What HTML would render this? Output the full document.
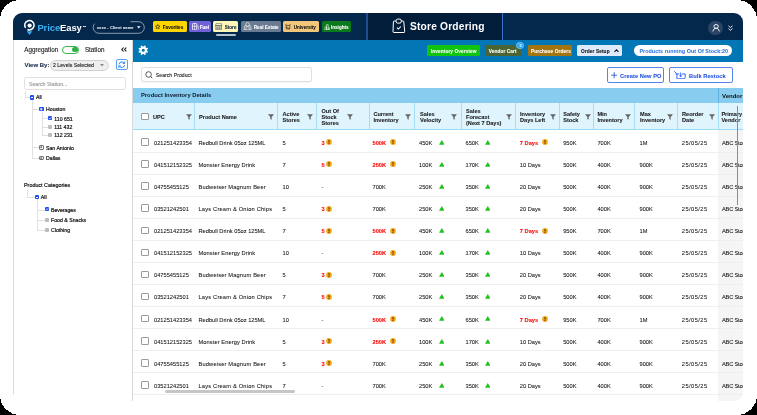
<!DOCTYPE html>
<html><head><meta charset="utf-8"><style>
*{margin:0;padding:0;box-sizing:border-box}
html,body{width:757px;height:415px;overflow:hidden;background:#000;font-family:"Liberation Sans",sans-serif}
.frame{position:absolute;left:0;top:0;width:757px;height:415px}
.app{position:absolute;left:0;top:0;width:757px;height:415px;clip-path:inset(13px 14px 14px 13px round 9px);background:#fff}
.app *{position:absolute}
.hdr{left:13px;top:13px;width:730px;height:27px;background:#03284b}
.so{left:366px;top:13px;width:137px;height:27px;background:#021d3a;border-left:2px solid #1d4f8f;border-right:1px solid #3a6fd0}
.sot{left:410px;top:20.5px;font-size:10.2px;font-weight:bold;color:#fff;white-space:nowrap;letter-spacing:0.2px}
.logo-t{left:37.4px;top:22.4px;font-size:9.4px;font-weight:bold;white-space:nowrap;color:#fff;letter-spacing:-0.05px}
.logo-t b{position:static;color:#3ab2fb}
.tm{left:83px;top:25.8px;width:2.6px;height:0.8px;background:#cfd8e2}
.pill{display:none}
.pillt{left:96.8px;top:24.8px;font-size:4.1px;font-weight:bold;color:#fff;white-space:nowrap;letter-spacing:0.05px}
.nb{top:21.2px;height:10.5px;border-radius:1.5px;font-size:4.6px;font-weight:bold;white-space:nowrap;line-height:13.6px;-webkit-text-stroke:0.08px currentColor}
.nb span{position:static}
.av{left:708px;top:20.6px;width:14.6px;height:14.6px;border-radius:50%;background:#2a4463}
.tb{left:133px;top:40px;width:610px;height:21.5px;background:#0377b5}
.btn{top:45px;height:10.8px;border-radius:1.5px;font-size:4.75px;font-weight:bold;color:#fff;white-space:nowrap;line-height:13.9px;letter-spacing:0.1px;-webkit-text-stroke:0.08px currentColor}
.oos{left:633.6px;top:44.9px;width:98.6px;height:10.9px;border-radius:6px;background:#fff;color:#1f6fe0;font-size:5.4px;font-weight:bold;white-space:nowrap;line-height:12.6px;padding-left:5.8px;letter-spacing:0.05px}
.srch{left:140.6px;top:67.2px;width:171px;height:15.2px;border:1px solid #dedede;border-radius:2.5px;background:#fff;box-shadow:0 0.5px 0.5px rgba(0,0,0,0.06)}
.srcht{left:155.8px;top:72.1px;font-size:5.1px;color:#222;-webkit-text-stroke:0.1px #222;white-space:nowrap;letter-spacing:0.05px}
.ob{top:67.2px;height:15.8px;border:1px solid #5584ee;border-radius:2px;background:#fff}
.obt{top:72.5px;font-size:5.7px;font-weight:bold;color:#1f50e0;-webkit-text-stroke:0.06px currentColor;white-space:nowrap;letter-spacing:0.05px}
.side{left:13px;top:40px;width:120px;height:361px;background:#fff;border-left:1px solid #d9d9d9;border-right:1px solid #d9d9d9}
.st{font-size:6px;color:#222;white-space:nowrap;-webkit-text-stroke:0.12px currentColor}
.wrap{left:0;top:0;width:757px;height:415px;will-change:transform}
.tbl{left:0;top:0;width:757px;height:415px;will-change:transform}
.pid{left:133px;top:88px;width:610px;height:14.8px;background:#88cdef;font-size:5.8px;font-weight:bold;color:#0d1a2b;padding-left:8px;line-height:14.5px;white-space:nowrap}
.vgrp{left:718px;top:88px;width:1px;height:14.8px;background:#5fb4de}
.vtxt{left:722px;top:92.8px;font-size:6px;font-weight:bold;color:#111}
.hrow{left:133px;top:103px;width:610px;height:27px;background:#dff4fd;border-bottom:1px solid #9cdbf7}
.hl{font-size:5.6px;line-height:6.1px;color:#1a1a1a;font-weight:bold;-webkit-text-stroke:0.08px currentColor;white-space:nowrap;transform:translateY(-50%);top:117px}
.flt{top:114px}
.vd{top:103px;width:1px;height:26px;background:#a6dcf6}
.cb{width:7.5px;height:7.5px;border:0.8px solid #9a9a9a;border-radius:1px;background:#fff}
.t{font-size:5.7px;color:#111;-webkit-text-stroke:0.06px currentColor;white-space:nowrap;transform:translateY(-50%);margin-top:1.3px}
.red{color:#f00;font-weight:bold}
.wn{width:6px;height:6px}
.tri{width:5.6px;height:4.8px}
.rline{left:133px;width:610px;height:1px;background:#efefef}
.vcol{left:718px;top:130px;width:25px;height:271px;background:#f5f5f5}
.hscroll{left:165px;top:389.8px;width:130px;height:3px;border-radius:2px;background:#c6c6c6}
.vscroll{left:737px;top:105.5px;width:1.3px;height:99px;background:#8c8c8c}

</style></head><body>
<svg class="frame" width="757" height="415" viewBox="0 0 757 415" shape-rendering="crispEdges"><rect x="0" y="0" width="757" height="415" rx="20" ry="20" fill="#fff"/></svg>
<div class="app">
<div class="wrap">
<div class="hdr"></div>
<div class="so"></div>
<svg style="left:391px;top:17px" width="16" height="18" viewBox="0 0 16 18"><path d="M5.2 4H3.2Q2.4 4 2.4 4.8L2 14.7Q2 15.5 2.8 15.5H13Q13.8 15.5 13.7 14.7L12.8 4.8Q12.7 4 12 4H10.2" fill="none" stroke="#fff" stroke-width="1"/><rect x="5.2" y="2.1" width="5" height="4" rx="1.3" fill="none" stroke="#fff" stroke-width="1"/><path d="M6 10.6L7.4 12L9.9 9.5" fill="none" stroke="#fff" stroke-width="1.05"/></svg>
<div class="sot">Store Ordering</div>
<svg style="left:22.2px;top:17.7px" width="14" height="18" viewBox="0 0 14 18"><path d="M3.55 9.9A4.7 4.7 0 1 1 5.41 11.46" fill="none" stroke="#fff" stroke-width="1.5"/><circle cx="7.6" cy="7.6" r="2.15" fill="#fff"/><path d="M4.7 13.2H10.3L7.5 17.1Z" fill="#35aaf2"/></svg>
<div class="logo-t"><b>Price</b>Easy</div>
<div class="tm"></div>
<svg style="left:92px;top:20.5px" width="53" height="13" viewBox="0 0 53 13"><path d="M38.5 0.7H46.5A5.8 5.8 0 0 1 46.5 12.3H7A5.8 5.8 0 0 1 1.2 6.5" fill="none" stroke="#aeb8c6" stroke-width="0.8"/><path d="M1.2 6.5A5.8 5.8 0 0 1 2.6 2.7" fill="none" stroke="#aeb8c6" stroke-width="0.8"/></svg>
<div class="pillt">xxxx - Client name</div>
<svg style="left:137.3px;top:26px" width="3.5" height="3" viewBox="0 0 3.5 3"><path d="M0 0.2H3.5L1.75 2.6Z" fill="#fff"/></svg>
<div class="nb" style="left:152.5px;width:34.5px;background:#ffd500;color:#111;padding-left:10.3px">Favorites</div>
<svg style="left:155.4px;top:24.1px" width="5.5" height="5.2" viewBox="0 0 10 9.5"><path d="M5 0.8L6.2 3.6L9.2 3.8L6.9 5.8L7.6 8.8L5 7.2L2.4 8.8L3.1 5.8L0.8 3.8L3.8 3.6Z" fill="none" stroke="#111" stroke-width="1.1" stroke-linejoin="round"/></svg>
<div class="nb" style="left:189.4px;width:21.5px;background:#7161d8;color:#fff;padding-left:10.3px">Fuel</div>
<svg style="left:191.6px;top:23px" width="7" height="7.4" viewBox="0 0 7 7.4"><rect x="0.5" y="0.5" width="4.2" height="6.4" rx="0.6" fill="none" stroke="#fff" stroke-width="0.75"/><path d="M0.5 3.3H4.7M2.6 0.5V6.9" stroke="#fff" stroke-width="0.6"/><path d="M4.7 2.3L6.3 3.2V6.6" fill="none" stroke="#fff" stroke-width="0.6"/></svg>
<div class="nb" style="left:213.4px;width:24.6px;background:#fff6b8;color:#0d2340;padding-left:11.3px">Store</div>
<svg style="left:215.3px;top:23px" width="7.4" height="7.4" viewBox="0 0 7.4 7.4"><path d="M1 0.6H6.4L7 2.6H0.4Z" fill="none" stroke="#5c6b7c" stroke-width="0.6"/><rect x="0.9" y="2.6" width="5.6" height="4.3" fill="none" stroke="#5c6b7c" stroke-width="0.7"/><path d="M0.9 4.2H6.5M0.9 5.6H6.5M2.8 2.6V6.9M4.6 2.6V6.9" stroke="#5c6b7c" stroke-width="0.5"/></svg>
<div style="left:215.8px;top:34px;width:20.6px;height:1.8px;background:#b5c1cd;border-radius:1px"></div>
<div class="nb" style="left:241px;width:39.8px;background:#6a7a90;color:#fff;padding-left:12.8px">Real Estate</div>
<svg style="left:242.8px;top:22px" width="9.2" height="8.4" viewBox="0 0 9.2 8.4"><circle cx="4.6" cy="2.4" r="1.8" fill="none" stroke="#fff" stroke-width="0.6"/><path d="M1.3 7.8V4.6A1.7 1.7 0 0 1 3 3.3M7.9 7.8V4.6A1.7 1.7 0 0 0 6.2 3.3M3 7.8V4.6H6.2V7.8M0.6 7.8H8.6" fill="none" stroke="#fff" stroke-width="0.6"/></svg>
<div class="nb" style="left:283.2px;width:36px;background:#f2c77a;color:#111;padding-left:10.5px">University</div>
<svg style="left:284.8px;top:24.2px" width="6" height="5.5" viewBox="0 0 6 5.5"><path d="M0.4 0.6L3 1.7L5.6 0.6M1.2 1.2V4.9H4.8V1.2M1.2 3L4.8 4.9" fill="none" stroke="#222" stroke-width="0.65"/></svg>
<div class="nb" style="left:321.8px;width:29.4px;background:#0b7a1b;color:#fff;padding-left:9.2px">Insights</div>
<svg style="left:323.6px;top:23.6px" width="6.6" height="6.2" viewBox="0 0 6.6 6.2"><path d="M0.4 5.8H6.2M1 5.8V2.8H2.6V5.8M2.6 5.8V0.6H4.2V5.8M4.2 5.8V3.8H5.8V5.8" fill="none" stroke="#fff" stroke-width="0.55"/></svg>
<div class="av"></div>
<svg style="left:711px;top:23.6px" width="10" height="10" viewBox="0 0 10 10"><ellipse cx="5.1" cy="2.4" rx="2.2" ry="1.9" fill="none" stroke="#fff" stroke-width="0.95"/><path d="M1.9 7.4C2.3 5.4 3.3 4.3 5.1 4.3C6.9 4.3 7.9 5.4 8.3 7.4" fill="none" stroke="#fff" stroke-width="0.95"/></svg>
<svg style="left:728.2px;top:24.7px" width="5" height="6.4" viewBox="0 0 5 6.4"><path d="M0.5 0.6L2.5 2.7L4.5 0.6M0.5 3.4L2.5 5.5L4.5 3.4" fill="none" stroke="#fff" stroke-width="0.9"/></svg>
<div class="tb"></div>
<svg style="left:137.25px;top:43.65px" width="12.5" height="12.5" viewBox="0 0 12.5 12.5"><path fill="#fff" fill-rule="evenodd" d="M9.95 6.84 L11.06 7.41 L10.47 8.84 L9.28 8.45 L8.45 9.28 L8.84 10.47 L7.41 11.06 L6.84 9.95 L5.66 9.95 L5.09 11.06 L3.66 10.47 L4.05 9.28 L3.22 8.45 L2.03 8.84 L1.44 7.41 L2.55 6.84 L2.55 5.66 L1.44 5.09 L2.03 3.66 L3.22 4.05 L4.05 3.22 L3.66 2.03 L5.09 1.44 L5.66 2.55 L6.84 2.55 L7.41 1.44 L8.84 2.03 L8.45 3.22 L9.28 4.05 L10.47 3.66 L11.06 5.09 L9.95 5.66Z M7.80 6.25 A1.55 1.55 0 1 0 4.70 6.25 A1.55 1.55 0 1 0 7.80 6.25Z"/></svg>
<div class="btn" style="left:427px;width:53px;background:#10c40f;padding-left:3.8px">Inventory Overview</div>
<div class="btn" style="left:484.8px;width:36.1px;background:#4b6434;padding-left:3.9px">Vendor Cart</div>
<div style="left:516.4px;top:41.7px;width:7.4px;height:7.4px;border-radius:50%;background:#22a5fb;border:0.6px solid #6cc4ff"></div>
<div style="left:519.4px;top:43px;font-size:4px;color:#fff;font-weight:bold;line-height:5px">5</div>
<div class="btn" style="left:528.3px;width:43.6px;background:#a27510;padding-left:2.8px">Purchase Orders</div>
<div class="btn" style="left:576.9px;width:44.9px;background:#dfeafb;color:#111;padding-left:4.2px">Order Setup</div>
<svg style="left:613.8px;top:49.2px" width="5" height="3.4" viewBox="0 0 5 3.4"><path d="M0.5 2.9L2.5 0.8L4.5 2.9" fill="none" stroke="#111" stroke-width="1.1"/></svg>
<div class="oos">Products running Out Of Stock:20</div>
<div class="srch"></div>
<svg style="left:144.6px;top:70.6px" width="8" height="8" viewBox="0 0 8 8"><circle cx="3.6" cy="3.5" r="2.8" fill="none" stroke="#333" stroke-width="0.8"/><path d="M5.6 5.5L7.2 7.2" stroke="#333" stroke-width="0.9"/></svg>
<div class="srcht">Search Product</div>
<div class="ob" style="left:607.2px;width:56.7px"></div>
<svg style="left:610.6px;top:72.2px" width="6.4" height="6.4" viewBox="0 0 6.4 6.4"><path d="M3.2 0.2V6.2M0.2 3.2H6.2" stroke="#2a5bd7" stroke-width="0.9"/></svg>
<div class="obt" style="left:620.1px">Create New PO</div>
<div class="ob" style="left:668.7px;width:63.9px"></div>
<svg style="left:673.6px;top:70.5px" width="12" height="8.6" viewBox="0 0 12 8.6"><path d="M0.5 0.6L2.2 2.1M2 3H4.9M8.4 3H11.2V6.6Q11.2 7.8 10 7.8H2.9V3" fill="none" stroke="#2356f0" stroke-width="0.9" stroke-linecap="round"/><path d="M6.7 1.5V5" stroke="#2356f0" stroke-width="0.9"/><path d="M4.9 4.5H8.5L6.7 6.1Z" fill="#2356f0"/></svg>
<div class="obt" style="left:689.1px">Bulk Restock</div>

<div class="side"></div>
<div class="st" style="left:24.3px;top:46.2px;font-size:6.3px;color:#222">Aggregation</div>
<div style="left:61.5px;top:45.5px;width:17.5px;height:8px;border-radius:4px;border:0.9px solid #33b54a;background:#fff"></div>
<div style="left:72px;top:46.8px;width:5.5px;height:5.5px;border-radius:50%;background:#2fb043"></div>
<div class="st" style="left:84.9px;top:46.2px;font-size:6.3px;color:#222">Station</div>
<svg style="left:120.5px;top:46.6px" width="6" height="5" viewBox="0 0 6 5"><path d="M2.6 0.5L0.8 2.5L2.6 4.5M5.4 0.5L3.6 2.5L5.4 4.5" fill="none" stroke="#111" stroke-width="1.1"/></svg>
<div class="st" style="left:24.5px;top:62px;font-size:6px;font-weight:bold;color:#1b2f52">View By:</div>
<div style="left:49.5px;top:59.5px;width:59.5px;height:11px;border-radius:6px;border:0.8px solid #d0d0d0;background:#efefef"></div>
<div class="st" style="left:53px;top:62.3px;font-size:5.2px;color:#222">2 Levels Selected</div>
<svg style="left:100px;top:64px" width="4" height="3" viewBox="0 0 4 3"><path d="M0 0H4L2 2.5Z" fill="#888"/></svg>
<div style="left:116px;top:59.2px;width:12px;height:11.2px;border-radius:2px;border:1px solid #5aa0f5;background:#fff"></div>
<svg style="left:118.4px;top:61.2px" width="7.6" height="7.4" viewBox="0 0 7.6 7.4"><path d="M0.9 3.4A2.9 2.9 0 0 1 6.1 2.1M6.7 4A2.9 2.9 0 0 1 1.5 5.3" fill="none" stroke="#2a82f0" stroke-width="1"/><path d="M6.8 0.5V2.5H4.8M0.8 6.9V4.9H2.8" fill="none" stroke="#2a82f0" stroke-width="0.9"/></svg>
<div style="left:24px;top:77.2px;width:101.8px;height:13.2px;border-radius:2.5px;border:0.8px solid #e0e0e0;background:#fff"></div>
<div class="st" style="left:29px;top:81.3px;font-size:5.2px;color:#999">Search Station...</div>
<div style="left:24.5px;top:91px;width:0;height:6.5px;border-left:0.8px solid #e0e0e0"></div>
<div style="left:24.5px;top:97px;width:5px;height:0;border-top:0.8px solid #e0e0e0"></div>
<div style="left:29.8px;top:95px;width:4.3px;height:4.5px;border-radius:1px;background:#1d4ff5"></div>
<div style="left:30.8px;top:97px;width:2.3px;height:0.7px;background:#fff"></div>
<div class="st" style="left:36px;top:94.3px;font-size:5.2px;color:#111;-webkit-text-stroke:0.2px #111">All</div>
<div style="left:31.5px;top:99.5px;width:0;height:58.5px;border-left:0.8px solid #e0e0e0"></div>
<div style="left:31.5px;top:109.2px;width:7.5px;height:0;border-top:0.8px solid #e0e0e0"></div>
<div style="left:31.5px;top:147.4px;width:7.5px;height:0;border-top:0.8px solid #e0e0e0"></div>
<div style="left:31.5px;top:157.8px;width:7.5px;height:0;border-top:0.8px solid #e0e0e0"></div>
<div style="left:39.3px;top:107px;width:4.4px;height:4.4px;border-radius:1px;background:#1d4ff5"></div>
<svg style="left:39.3px;top:107px" width="4.4" height="4.4" viewBox="0 0 4.4 4.4"><path d="M2.2 0.9V3.5M0.9 2.2H3.5" stroke="#fff" stroke-width="0.85"/></svg>
<div class="st" style="left:46px;top:106.4px;font-size:5.2px;color:#111;-webkit-text-stroke:0.2px #111">Houston</div>
<div style="left:41.5px;top:111.5px;width:0;height:24px;border-left:0.8px solid #e0e0e0"></div>
<div style="left:41.5px;top:118.3px;width:6.5px;height:0;border-top:0.8px solid #e0e0e0"></div>
<div style="left:41.5px;top:126.7px;width:6.5px;height:0;border-top:0.8px solid #e0e0e0"></div>
<div style="left:41.5px;top:135.3px;width:6.5px;height:0;border-top:0.8px solid #e0e0e0"></div>
<div style="left:48px;top:116.2px;width:4.4px;height:4.2px;border-radius:1px;background:#1d4ff5"></div>
<svg style="left:48px;top:116.2px" width="4.4" height="4.2" viewBox="0 0 4.4 4.2"><path d="M1 2.1L1.9 3L3.4 1.3" fill="none" stroke="#fff" stroke-width="0.7"/></svg>
<div class="st" style="left:54.3px;top:115.5px;font-size:5.2px;color:#111;-webkit-text-stroke:0.2px #111">110 651</div>
<div style="left:48px;top:124.6px;width:4.4px;height:4.3px;border-radius:1px;background:#bdbdbd"></div>
<div class="st" style="left:54.3px;top:123.9px;font-size:5.2px;color:#111;-webkit-text-stroke:0.2px #111">111 432</div>
<div style="left:48px;top:133px;width:4.4px;height:4.3px;border-radius:1px;background:#bdbdbd"></div>
<div class="st" style="left:54.3px;top:132.3px;font-size:5.2px;color:#111;-webkit-text-stroke:0.2px #111">112 231</div>
<div style="left:39.3px;top:145.2px;width:4.4px;height:4.4px;border-radius:1px;border:0.6px solid #777;background:#fff"></div>
<svg style="left:39.3px;top:145.2px" width="4.4" height="4.4" viewBox="0 0 4.4 4.4"><path d="M2.2 1V3.4M1 2.2H3.4" stroke="#444" stroke-width="0.6"/></svg>
<div class="st" style="left:46px;top:144.6px;font-size:5.2px;color:#111;-webkit-text-stroke:0.2px #111">San Antonio</div>
<div style="left:39.3px;top:155.6px;width:4.4px;height:4.4px;border-radius:1px;border:0.6px solid #777;background:#fff"></div>
<svg style="left:39.3px;top:155.6px" width="4.4" height="4.4" viewBox="0 0 4.4 4.4"><path d="M2.2 1V3.4M1 2.2H3.4" stroke="#444" stroke-width="0.6"/></svg>
<div class="st" style="left:46px;top:155px;font-size:5.2px;color:#111;-webkit-text-stroke:0.2px #111">Dallas</div>
<div class="st" style="left:24px;top:182.3px;font-size:5.4px;color:#111;-webkit-text-stroke:0.2px #111">Product Categories</div>
<div style="left:26.5px;top:189.5px;width:0;height:7.5px;border-left:0.8px solid #e0e0e0"></div>
<div style="left:26.5px;top:197px;width:8px;height:0;border-top:0.8px solid #e0e0e0"></div>
<div style="left:34.6px;top:195.2px;width:4.3px;height:3.6px;border-radius:1px;background:#1d4ff5"></div>
<div style="left:35.5px;top:196.7px;width:2.5px;height:0.6px;background:#fff"></div>
<div class="st" style="left:40.8px;top:194.3px;font-size:5.2px;color:#111;-webkit-text-stroke:0.2px #111">All</div>
<div style="left:36.6px;top:199px;width:0;height:31px;border-left:0.8px solid #e0e0e0"></div>
<div style="left:36.6px;top:209.5px;width:8px;height:0;border-top:0.8px solid #e0e0e0"></div>
<div style="left:36.6px;top:220px;width:8px;height:0;border-top:0.8px solid #e0e0e0"></div>
<div style="left:36.6px;top:229.9px;width:8px;height:0;border-top:0.8px solid #e0e0e0"></div>
<div style="left:44.7px;top:207.3px;width:4.2px;height:4px;border-radius:1px;background:#1d4ff5"></div>
<svg style="left:44.7px;top:207.3px" width="4.2" height="4" viewBox="0 0 4.2 4"><path d="M1 2L1.8 2.8L3.2 1.2" fill="none" stroke="#fff" stroke-width="0.7"/></svg>
<div class="st" style="left:51px;top:206.6px;font-size:5.2px;color:#111;-webkit-text-stroke:0.2px #111">Beverages</div>
<div style="left:44.7px;top:217.8px;width:4.2px;height:4.2px;border-radius:1px;background:#bdbdbd"></div>
<div class="st" style="left:51px;top:217.1px;font-size:5.2px;color:#111;-webkit-text-stroke:0.2px #111">Food &amp; Snacks</div>
<div style="left:44.7px;top:227.8px;width:4.2px;height:4.2px;border-radius:1px;background:#bdbdbd"></div>
<div class="st" style="left:51px;top:227.1px;font-size:5.2px;color:#111;-webkit-text-stroke:0.2px #111">Clothing</div>

</div>
<div class="tbl">
<div class="pid">Product Inventory Details</div>
<div class="vgrp"></div>
<div class="vtxt">Vendor</div>
<div class="hrow"></div>
<div class="hl" style="left:153px">UPC</div><div class="hl" style="left:199px">Product Name</div><div class="hl" style="left:282.5px">Active<br>Stores</div><div class="hl" style="left:321.5px">Out Of<br>Stock<br>Stores</div><div class="hl" style="left:373.4px">Current<br>Inventory</div><div class="hl" style="left:420px">Sales<br>Velocity</div><div class="hl" style="left:466px">Sales<br>Forecast<br>(Next 7 Days)</div><div class="hl" style="left:520px">Inventory<br>Days Left</div><div class="hl" style="left:563.2px">Safety<br>Stock</div><div class="hl" style="left:597.4px">Min<br>Inventory</div><div class="hl" style="left:640px">Max<br>Inventory</div><div class="hl" style="left:682px">Reorder<br>Date</div><div class="hl" style="left:721.4px">Primary<br>Vendor</div><svg class="flt" style="left:185.6px" width="6" height="6" viewBox="0 0 6 6"><path d="M0 0.3H6L3.7 3V5.7L2.3 5V3Z" fill="#666"/></svg><svg class="flt" style="left:267.6px" width="6" height="6" viewBox="0 0 6 6"><path d="M0 0.3H6L3.7 3V5.7L2.3 5V3Z" fill="#666"/></svg><svg class="flt" style="left:307.4px" width="6" height="6" viewBox="0 0 6 6"><path d="M0 0.3H6L3.7 3V5.7L2.3 5V3Z" fill="#666"/></svg><svg class="flt" style="left:346.8px" width="6" height="6" viewBox="0 0 6 6"><path d="M0 0.3H6L3.7 3V5.7L2.3 5V3Z" fill="#666"/></svg><svg class="flt" style="left:405.2px" width="6" height="6" viewBox="0 0 6 6"><path d="M0 0.3H6L3.7 3V5.7L2.3 5V3Z" fill="#666"/></svg><svg class="flt" style="left:451.4px" width="6" height="6" viewBox="0 0 6 6"><path d="M0 0.3H6L3.7 3V5.7L2.3 5V3Z" fill="#666"/></svg><svg class="flt" style="left:505.8px" width="6" height="6" viewBox="0 0 6 6"><path d="M0 0.3H6L3.7 3V5.7L2.3 5V3Z" fill="#666"/></svg><svg class="flt" style="left:550.4px" width="6" height="6" viewBox="0 0 6 6"><path d="M0 0.3H6L3.7 3V5.7L2.3 5V3Z" fill="#666"/></svg><svg class="flt" style="left:585.3px" width="6" height="6" viewBox="0 0 6 6"><path d="M0 0.3H6L3.7 3V5.7L2.3 5V3Z" fill="#666"/></svg><svg class="flt" style="left:625.1px" width="6" height="6" viewBox="0 0 6 6"><path d="M0 0.3H6L3.7 3V5.7L2.3 5V3Z" fill="#666"/></svg><svg class="flt" style="left:666.9px" width="6" height="6" viewBox="0 0 6 6"><path d="M0 0.3H6L3.7 3V5.7L2.3 5V3Z" fill="#666"/></svg><svg class="flt" style="left:708.6px" width="6" height="6" viewBox="0 0 6 6"><path d="M0 0.3H6L3.7 3V5.7L2.3 5V3Z" fill="#666"/></svg><div class="vd" style="left:194px"></div><div class="vd" style="left:277px"></div><div class="vd" style="left:316px"></div><div class="vd" style="left:369px"></div><div class="vd" style="left:414px"></div><div class="vd" style="left:461px"></div><div class="vd" style="left:515px"></div><div class="vd" style="left:559px"></div><div class="vd" style="left:593px"></div><div class="vd" style="left:634px"></div><div class="vd" style="left:677px"></div><div class="vd" style="left:718px"></div><span class="cb" style="left:141px;top:112.5px"></span>
<div class="vcol"></div>
<span class="cb" style="left:141px;top:138.1px"></span><span class="t" style="left:154px;top:141.3px">021251423354</span><span class="t" style="left:198.5px;top:141.3px;letter-spacing:0px">Redbull Drink 05oz 125ML</span><span class="t" style="left:282.5px;top:141.3px">5</span><span class="t red" style="left:321.5px;top:141.3px">3</span><svg class="wn" style="left:326.4px;top:139.0px" width="6" height="6" viewBox="0 0 6 6"><circle cx="3" cy="3" r="2.9" fill="#f5a81c"/><rect x="2.5" y="1.2" width="1" height="2.3" fill="#4a2800"/><rect x="2.5" y="4" width="1" height="0.9" fill="#4a2800"/></svg><span class="t red" style="left:372.5px;top:141.3px">500K</span><svg class="wn" style="left:389.9px;top:139.0px" width="6" height="6" viewBox="0 0 6 6"><circle cx="3" cy="3" r="2.9" fill="#f5a81c"/><rect x="2.5" y="1.2" width="1" height="2.3" fill="#4a2800"/><rect x="2.5" y="4" width="1" height="0.9" fill="#4a2800"/></svg><span class="t" style="left:419px;top:141.3px">450K</span><svg class="tri" style="left:438.6px;top:140px" width="5.6" height="4.8" viewBox="0 0 5.6 4.8"><path d="M2.8 0L5.6 4.8H0Z" fill="#1ec31e"/></svg><span class="t" style="left:465.5px;top:141.3px">650K</span><svg class="tri" style="left:484.9px;top:140px" width="5.6" height="4.8" viewBox="0 0 5.6 4.8"><path d="M2.8 0L5.6 4.8H0Z" fill="#1ec31e"/></svg><span class="t red" style="left:519.8px;top:141.3px">7 Days</span><svg class="wn" style="left:541.5px;top:139.0px" width="6" height="6" viewBox="0 0 6 6"><circle cx="3" cy="3" r="2.9" fill="#f5a81c"/><rect x="2.5" y="1.2" width="1" height="2.3" fill="#4a2800"/><rect x="2.5" y="4" width="1" height="0.9" fill="#4a2800"/></svg><span class="t" style="left:563.2px;top:141.3px">950K</span><span class="t" style="left:597.4px;top:141.3px">700K</span><span class="t" style="left:639.5px;top:141.3px">1M</span><span class="t" style="left:681.8px;top:141.3px;letter-spacing:0.45px">25/05/25</span><span class="t" style="left:722px;top:141.3px;letter-spacing:-0.2px">ABC Store</span><div class="rline" style="top:152px"></div><span class="cb" style="left:141px;top:160.2px"></span><span class="t" style="left:154px;top:163.42px">041512152325</span><span class="t" style="left:198.5px;top:163.42px;letter-spacing:0.09px">Monster Energy Drink</span><span class="t" style="left:282.5px;top:163.42px">7</span><span class="t red" style="left:321.5px;top:163.42px">5</span><svg class="wn" style="left:326.4px;top:161.0px" width="6" height="6" viewBox="0 0 6 6"><circle cx="3" cy="3" r="2.9" fill="#f5a81c"/><rect x="2.5" y="1.2" width="1" height="2.3" fill="#4a2800"/><rect x="2.5" y="4" width="1" height="0.9" fill="#4a2800"/></svg><span class="t red" style="left:372.5px;top:163.42px">250K</span><svg class="wn" style="left:389.9px;top:161.0px" width="6" height="6" viewBox="0 0 6 6"><circle cx="3" cy="3" r="2.9" fill="#f5a81c"/><rect x="2.5" y="1.2" width="1" height="2.3" fill="#4a2800"/><rect x="2.5" y="4" width="1" height="0.9" fill="#4a2800"/></svg><span class="t" style="left:419px;top:163.42px">100K</span><svg class="tri" style="left:438.6px;top:162px" width="5.6" height="4.8" viewBox="0 0 5.6 4.8"><path d="M2.8 0L5.6 4.8H0Z" fill="#1ec31e"/></svg><span class="t" style="left:465.5px;top:163.42px">170K</span><svg class="tri" style="left:484.9px;top:162px" width="5.6" height="4.8" viewBox="0 0 5.6 4.8"><path d="M2.8 0L5.6 4.8H0Z" fill="#1ec31e"/></svg><span class="t" style="left:519.8px;top:163.42px">10 Days</span><span class="t" style="left:563.2px;top:163.42px">500K</span><span class="t" style="left:597.4px;top:163.42px">400K</span><span class="t" style="left:639.5px;top:163.42px">900K</span><span class="t" style="left:681.8px;top:163.42px;letter-spacing:0.45px">25/05/25</span><span class="t" style="left:722px;top:163.42px;letter-spacing:-0.2px">ABC Store</span><div class="rline" style="top:174px"></div><span class="cb" style="left:141px;top:182.3px"></span><span class="t" style="left:154px;top:185.54px">04755455125</span><span class="t" style="left:198.5px;top:185.54px;letter-spacing:0.165px">Budweiser Magnum Beer</span><span class="t" style="left:282.5px;top:185.54px">10</span><span class="t" style="left:321.5px;top:185.54px">-</span><span class="t" style="left:372.5px;top:185.54px">700K</span><span class="t" style="left:419px;top:185.54px">250K</span><svg class="tri" style="left:438.6px;top:184px" width="5.6" height="4.8" viewBox="0 0 5.6 4.8"><path d="M2.8 0L5.6 4.8H0Z" fill="#1ec31e"/></svg><span class="t" style="left:465.5px;top:185.54px">350K</span><svg class="tri" style="left:484.9px;top:184px" width="5.6" height="4.8" viewBox="0 0 5.6 4.8"><path d="M2.8 0L5.6 4.8H0Z" fill="#1ec31e"/></svg><span class="t" style="left:519.8px;top:185.54px">20 Days</span><span class="t" style="left:563.2px;top:185.54px">500K</span><span class="t" style="left:597.4px;top:185.54px">400K</span><span class="t" style="left:639.5px;top:185.54px">900K</span><span class="t" style="left:681.8px;top:185.54px;letter-spacing:0.45px">25/05/25</span><span class="t" style="left:722px;top:185.54px;letter-spacing:-0.2px">ABC Store</span><div class="rline" style="top:196px"></div><span class="cb" style="left:141px;top:204.4px"></span><span class="t" style="left:154px;top:207.66px">03521242501</span><span class="t" style="left:198.5px;top:207.66px;letter-spacing:0.2px">Lays Cream &amp; Onion Chips</span><span class="t" style="left:282.5px;top:207.66px">5</span><span class="t red" style="left:321.5px;top:207.66px">3</span><svg class="wn" style="left:326.4px;top:206.0px" width="6" height="6" viewBox="0 0 6 6"><circle cx="3" cy="3" r="2.9" fill="#f5a81c"/><rect x="2.5" y="1.2" width="1" height="2.3" fill="#4a2800"/><rect x="2.5" y="4" width="1" height="0.9" fill="#4a2800"/></svg><span class="t" style="left:372.5px;top:207.66px">700K</span><span class="t" style="left:419px;top:207.66px">250K</span><svg class="tri" style="left:438.6px;top:206px" width="5.6" height="4.8" viewBox="0 0 5.6 4.8"><path d="M2.8 0L5.6 4.8H0Z" fill="#1ec31e"/></svg><span class="t" style="left:465.5px;top:207.66px">350K</span><svg class="tri" style="left:484.9px;top:206px" width="5.6" height="4.8" viewBox="0 0 5.6 4.8"><path d="M2.8 0L5.6 4.8H0Z" fill="#1ec31e"/></svg><span class="t" style="left:519.8px;top:207.66px">20 Days</span><span class="t" style="left:563.2px;top:207.66px">500K</span><span class="t" style="left:597.4px;top:207.66px">400K</span><span class="t" style="left:639.5px;top:207.66px">900K</span><span class="t" style="left:681.8px;top:207.66px;letter-spacing:0.45px">25/05/25</span><span class="t" style="left:722px;top:207.66px;letter-spacing:-0.2px">ABC Store</span><div class="rline" style="top:218px"></div><span class="cb" style="left:141px;top:226.5px"></span><span class="t" style="left:154px;top:229.78px">021251423354</span><span class="t" style="left:198.5px;top:229.78px;letter-spacing:0px">Redbull Drink 05oz 125ML</span><span class="t" style="left:282.5px;top:229.78px">7</span><span class="t red" style="left:321.5px;top:229.78px">5</span><svg class="wn" style="left:326.4px;top:228.0px" width="6" height="6" viewBox="0 0 6 6"><circle cx="3" cy="3" r="2.9" fill="#f5a81c"/><rect x="2.5" y="1.2" width="1" height="2.3" fill="#4a2800"/><rect x="2.5" y="4" width="1" height="0.9" fill="#4a2800"/></svg><span class="t red" style="left:372.5px;top:229.78px">500K</span><svg class="wn" style="left:389.9px;top:228.0px" width="6" height="6" viewBox="0 0 6 6"><circle cx="3" cy="3" r="2.9" fill="#f5a81c"/><rect x="2.5" y="1.2" width="1" height="2.3" fill="#4a2800"/><rect x="2.5" y="4" width="1" height="0.9" fill="#4a2800"/></svg><span class="t" style="left:419px;top:229.78px">450K</span><svg class="tri" style="left:438.6px;top:228px" width="5.6" height="4.8" viewBox="0 0 5.6 4.8"><path d="M2.8 0L5.6 4.8H0Z" fill="#1ec31e"/></svg><span class="t" style="left:465.5px;top:229.78px">650K</span><svg class="tri" style="left:484.9px;top:228px" width="5.6" height="4.8" viewBox="0 0 5.6 4.8"><path d="M2.8 0L5.6 4.8H0Z" fill="#1ec31e"/></svg><span class="t red" style="left:519.8px;top:229.78px">7 Days</span><svg class="wn" style="left:541.5px;top:228.0px" width="6" height="6" viewBox="0 0 6 6"><circle cx="3" cy="3" r="2.9" fill="#f5a81c"/><rect x="2.5" y="1.2" width="1" height="2.3" fill="#4a2800"/><rect x="2.5" y="4" width="1" height="0.9" fill="#4a2800"/></svg><span class="t" style="left:563.2px;top:229.78px">950K</span><span class="t" style="left:597.4px;top:229.78px">700K</span><span class="t" style="left:639.5px;top:229.78px">1M</span><span class="t" style="left:681.8px;top:229.78px;letter-spacing:0.45px">25/05/25</span><span class="t" style="left:722px;top:229.78px;letter-spacing:-0.2px">ABC Store</span><div class="rline" style="top:240px"></div><span class="cb" style="left:141px;top:248.6px"></span><span class="t" style="left:154px;top:251.9px">041512152325</span><span class="t" style="left:198.5px;top:251.9px;letter-spacing:0.09px">Monster Energy Drink</span><span class="t" style="left:282.5px;top:251.9px">10</span><span class="t" style="left:321.5px;top:251.9px">-</span><span class="t red" style="left:372.5px;top:251.9px">250K</span><svg class="wn" style="left:389.9px;top:250.0px" width="6" height="6" viewBox="0 0 6 6"><circle cx="3" cy="3" r="2.9" fill="#f5a81c"/><rect x="2.5" y="1.2" width="1" height="2.3" fill="#4a2800"/><rect x="2.5" y="4" width="1" height="0.9" fill="#4a2800"/></svg><span class="t" style="left:419px;top:251.9px">100K</span><svg class="tri" style="left:438.6px;top:250px" width="5.6" height="4.8" viewBox="0 0 5.6 4.8"><path d="M2.8 0L5.6 4.8H0Z" fill="#1ec31e"/></svg><span class="t" style="left:465.5px;top:251.9px">170K</span><svg class="tri" style="left:484.9px;top:250px" width="5.6" height="4.8" viewBox="0 0 5.6 4.8"><path d="M2.8 0L5.6 4.8H0Z" fill="#1ec31e"/></svg><span class="t" style="left:519.8px;top:251.9px">10 Days</span><span class="t" style="left:563.2px;top:251.9px">500K</span><span class="t" style="left:597.4px;top:251.9px">400K</span><span class="t" style="left:639.5px;top:251.9px">900K</span><span class="t" style="left:681.8px;top:251.9px;letter-spacing:0.45px">25/05/25</span><span class="t" style="left:722px;top:251.9px;letter-spacing:-0.2px">ABC Store</span><div class="rline" style="top:262px"></div><span class="cb" style="left:141px;top:270.7px"></span><span class="t" style="left:154px;top:274.02px">04755455125</span><span class="t" style="left:198.5px;top:274.02px;letter-spacing:0.165px">Budweiser Magnum Beer</span><span class="t" style="left:282.5px;top:274.02px">5</span><span class="t red" style="left:321.5px;top:274.02px">3</span><svg class="wn" style="left:326.4px;top:272.0px" width="6" height="6" viewBox="0 0 6 6"><circle cx="3" cy="3" r="2.9" fill="#f5a81c"/><rect x="2.5" y="1.2" width="1" height="2.3" fill="#4a2800"/><rect x="2.5" y="4" width="1" height="0.9" fill="#4a2800"/></svg><span class="t" style="left:372.5px;top:274.02px">700K</span><span class="t" style="left:419px;top:274.02px">250K</span><svg class="tri" style="left:438.6px;top:272px" width="5.6" height="4.8" viewBox="0 0 5.6 4.8"><path d="M2.8 0L5.6 4.8H0Z" fill="#1ec31e"/></svg><span class="t" style="left:465.5px;top:274.02px">350K</span><svg class="tri" style="left:484.9px;top:272px" width="5.6" height="4.8" viewBox="0 0 5.6 4.8"><path d="M2.8 0L5.6 4.8H0Z" fill="#1ec31e"/></svg><span class="t" style="left:519.8px;top:274.02px">20 Days</span><span class="t" style="left:563.2px;top:274.02px">500K</span><span class="t" style="left:597.4px;top:274.02px">400K</span><span class="t" style="left:639.5px;top:274.02px">900K</span><span class="t" style="left:681.8px;top:274.02px;letter-spacing:0.45px">25/05/25</span><span class="t" style="left:722px;top:274.02px;letter-spacing:-0.2px">ABC Store</span><div class="rline" style="top:284px"></div><span class="cb" style="left:141px;top:292.8px"></span><span class="t" style="left:154px;top:296.14px">03521242501</span><span class="t" style="left:198.5px;top:296.14px;letter-spacing:0.2px">Lays Cream &amp; Onion Chips</span><span class="t" style="left:282.5px;top:296.14px">7</span><span class="t red" style="left:321.5px;top:296.14px">5</span><svg class="wn" style="left:326.4px;top:294.0px" width="6" height="6" viewBox="0 0 6 6"><circle cx="3" cy="3" r="2.9" fill="#f5a81c"/><rect x="2.5" y="1.2" width="1" height="2.3" fill="#4a2800"/><rect x="2.5" y="4" width="1" height="0.9" fill="#4a2800"/></svg><span class="t" style="left:372.5px;top:296.14px">700K</span><span class="t" style="left:419px;top:296.14px">250K</span><svg class="tri" style="left:438.6px;top:294px" width="5.6" height="4.8" viewBox="0 0 5.6 4.8"><path d="M2.8 0L5.6 4.8H0Z" fill="#1ec31e"/></svg><span class="t" style="left:465.5px;top:296.14px">350K</span><svg class="tri" style="left:484.9px;top:294px" width="5.6" height="4.8" viewBox="0 0 5.6 4.8"><path d="M2.8 0L5.6 4.8H0Z" fill="#1ec31e"/></svg><span class="t" style="left:519.8px;top:296.14px">20 Days</span><span class="t" style="left:563.2px;top:296.14px">500K</span><span class="t" style="left:597.4px;top:296.14px">400K</span><span class="t" style="left:639.5px;top:296.14px">900K</span><span class="t" style="left:681.8px;top:296.14px;letter-spacing:0.45px">25/05/25</span><span class="t" style="left:722px;top:296.14px;letter-spacing:-0.2px">ABC Store</span><div class="rline" style="top:306px"></div><span class="cb" style="left:141px;top:314.9px"></span><span class="t" style="left:154px;top:318.26px">021251423354</span><span class="t" style="left:198.5px;top:318.26px;letter-spacing:0px">Redbull Drink 05oz 125ML</span><span class="t" style="left:282.5px;top:318.26px">10</span><span class="t" style="left:321.5px;top:318.26px">-</span><span class="t red" style="left:372.5px;top:318.26px">500K</span><svg class="wn" style="left:389.9px;top:316.0px" width="6" height="6" viewBox="0 0 6 6"><circle cx="3" cy="3" r="2.9" fill="#f5a81c"/><rect x="2.5" y="1.2" width="1" height="2.3" fill="#4a2800"/><rect x="2.5" y="4" width="1" height="0.9" fill="#4a2800"/></svg><span class="t" style="left:419px;top:318.26px">450K</span><svg class="tri" style="left:438.6px;top:316px" width="5.6" height="4.8" viewBox="0 0 5.6 4.8"><path d="M2.8 0L5.6 4.8H0Z" fill="#1ec31e"/></svg><span class="t" style="left:465.5px;top:318.26px">650K</span><svg class="tri" style="left:484.9px;top:316px" width="5.6" height="4.8" viewBox="0 0 5.6 4.8"><path d="M2.8 0L5.6 4.8H0Z" fill="#1ec31e"/></svg><span class="t red" style="left:519.8px;top:318.26px">7 Days</span><svg class="wn" style="left:541.5px;top:316.0px" width="6" height="6" viewBox="0 0 6 6"><circle cx="3" cy="3" r="2.9" fill="#f5a81c"/><rect x="2.5" y="1.2" width="1" height="2.3" fill="#4a2800"/><rect x="2.5" y="4" width="1" height="0.9" fill="#4a2800"/></svg><span class="t" style="left:563.2px;top:318.26px">950K</span><span class="t" style="left:597.4px;top:318.26px">700K</span><span class="t" style="left:639.5px;top:318.26px">1M</span><span class="t" style="left:681.8px;top:318.26px;letter-spacing:0.45px">25/05/25</span><span class="t" style="left:722px;top:318.26px;letter-spacing:-0.2px">ABC Store</span><div class="rline" style="top:328px"></div><span class="cb" style="left:141px;top:337.0px"></span><span class="t" style="left:154px;top:340.38px">041512152325</span><span class="t" style="left:198.5px;top:340.38px;letter-spacing:0.09px">Monster Energy Drink</span><span class="t" style="left:282.5px;top:340.38px">5</span><span class="t red" style="left:321.5px;top:340.38px">3</span><svg class="wn" style="left:326.4px;top:338.0px" width="6" height="6" viewBox="0 0 6 6"><circle cx="3" cy="3" r="2.9" fill="#f5a81c"/><rect x="2.5" y="1.2" width="1" height="2.3" fill="#4a2800"/><rect x="2.5" y="4" width="1" height="0.9" fill="#4a2800"/></svg><span class="t red" style="left:372.5px;top:340.38px">250K</span><svg class="wn" style="left:389.9px;top:338.0px" width="6" height="6" viewBox="0 0 6 6"><circle cx="3" cy="3" r="2.9" fill="#f5a81c"/><rect x="2.5" y="1.2" width="1" height="2.3" fill="#4a2800"/><rect x="2.5" y="4" width="1" height="0.9" fill="#4a2800"/></svg><span class="t" style="left:419px;top:340.38px">100K</span><svg class="tri" style="left:438.6px;top:339px" width="5.6" height="4.8" viewBox="0 0 5.6 4.8"><path d="M2.8 0L5.6 4.8H0Z" fill="#1ec31e"/></svg><span class="t" style="left:465.5px;top:340.38px">170K</span><svg class="tri" style="left:484.9px;top:339px" width="5.6" height="4.8" viewBox="0 0 5.6 4.8"><path d="M2.8 0L5.6 4.8H0Z" fill="#1ec31e"/></svg><span class="t" style="left:519.8px;top:340.38px">10 Days</span><span class="t" style="left:563.2px;top:340.38px">500K</span><span class="t" style="left:597.4px;top:340.38px">400K</span><span class="t" style="left:639.5px;top:340.38px">900K</span><span class="t" style="left:681.8px;top:340.38px;letter-spacing:0.45px">25/05/25</span><span class="t" style="left:722px;top:340.38px;letter-spacing:-0.2px">ABC Store</span><div class="rline" style="top:350px"></div><span class="cb" style="left:141px;top:359.1px"></span><span class="t" style="left:154px;top:362.5px">04755455125</span><span class="t" style="left:198.5px;top:362.5px;letter-spacing:0.165px">Budweiser Magnum Beer</span><span class="t" style="left:282.5px;top:362.5px">5</span><span class="t red" style="left:321.5px;top:362.5px">3</span><svg class="wn" style="left:326.4px;top:360.0px" width="6" height="6" viewBox="0 0 6 6"><circle cx="3" cy="3" r="2.9" fill="#f5a81c"/><rect x="2.5" y="1.2" width="1" height="2.3" fill="#4a2800"/><rect x="2.5" y="4" width="1" height="0.9" fill="#4a2800"/></svg><span class="t" style="left:372.5px;top:362.5px">700K</span><span class="t" style="left:419px;top:362.5px">250K</span><svg class="tri" style="left:438.6px;top:361px" width="5.6" height="4.8" viewBox="0 0 5.6 4.8"><path d="M2.8 0L5.6 4.8H0Z" fill="#1ec31e"/></svg><span class="t" style="left:465.5px;top:362.5px">350K</span><svg class="tri" style="left:484.9px;top:361px" width="5.6" height="4.8" viewBox="0 0 5.6 4.8"><path d="M2.8 0L5.6 4.8H0Z" fill="#1ec31e"/></svg><span class="t" style="left:519.8px;top:362.5px">20 Days</span><span class="t" style="left:563.2px;top:362.5px">500K</span><span class="t" style="left:597.4px;top:362.5px">400K</span><span class="t" style="left:639.5px;top:362.5px">900K</span><span class="t" style="left:681.8px;top:362.5px;letter-spacing:0.45px">25/05/25</span><span class="t" style="left:722px;top:362.5px;letter-spacing:-0.2px">ABC Store</span><div class="rline" style="top:372px"></div><span class="cb" style="left:141px;top:381.2px"></span><span class="t" style="left:154px;top:384.62px">03521242501</span><span class="t" style="left:198.5px;top:384.62px;letter-spacing:0.2px">Lays Cream &amp; Onion Chips</span><span class="t" style="left:282.5px;top:384.62px">7</span><span class="t" style="left:321.5px;top:384.62px">-</span><span class="t" style="left:372.5px;top:384.62px">700K</span><span class="t" style="left:419px;top:384.62px">250K</span><svg class="tri" style="left:438.6px;top:383px" width="5.6" height="4.8" viewBox="0 0 5.6 4.8"><path d="M2.8 0L5.6 4.8H0Z" fill="#1ec31e"/></svg><span class="t" style="left:465.5px;top:384.62px">350K</span><svg class="tri" style="left:484.9px;top:383px" width="5.6" height="4.8" viewBox="0 0 5.6 4.8"><path d="M2.8 0L5.6 4.8H0Z" fill="#1ec31e"/></svg><span class="t" style="left:519.8px;top:384.62px">20 Days</span><span class="t" style="left:563.2px;top:384.62px">500K</span><span class="t" style="left:597.4px;top:384.62px">400K</span><span class="t" style="left:639.5px;top:384.62px">900K</span><span class="t" style="left:681.8px;top:384.62px;letter-spacing:0.45px">25/05/25</span><span class="t" style="left:722px;top:384.62px;letter-spacing:-0.2px">ABC Store</span><div class="rline" style="top:394px"></div>
<div class="hscroll"></div>
<div class="vscroll"></div>
</div>
</div>
</body></html>
